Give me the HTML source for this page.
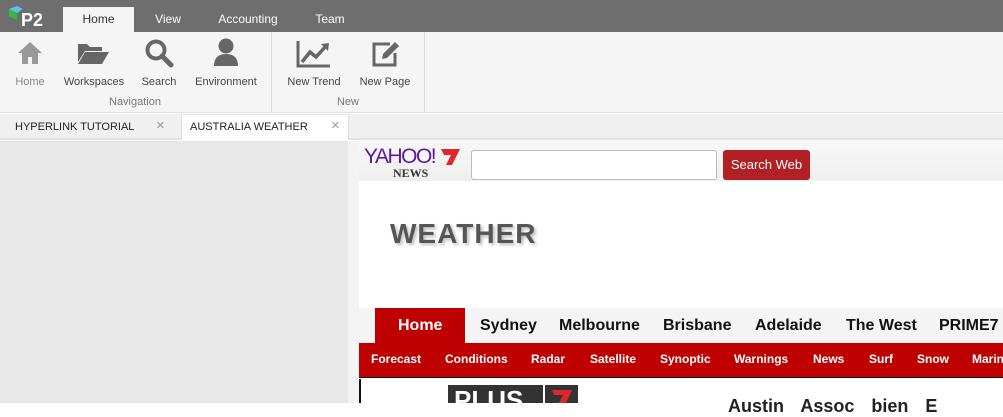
<!DOCTYPE html>
<html><head><style>
*{margin:0;padding:0;box-sizing:border-box}
body{width:1003px;height:403px;overflow:hidden;background:#fff;font-family:"Liberation Sans",sans-serif;position:relative}
.a{position:absolute}
.top{left:0;top:0;width:1003px;height:32px;background:#6e6e6e}
.tab{top:7px;height:25px;font-size:12px;color:#fff;text-align:center;line-height:25px}
.rib{left:0;top:32px;width:1003px;height:81px;background:#f5f5f5;border-bottom:1px solid #e0e0e0}
.lbl{font-size:11px;color:#444;top:76px;text-align:center}
.grp{font-size:11px;color:#777;top:96px;text-align:center}
.nav{font-size:16px;font-weight:bold;color:#111;top:317px}
.sub{font-size:12px;font-weight:bold;color:#fff;top:352px}
</style></head><body>
<div class="a top"></div>
<svg class="a" style="left:9px;top:6px" width="42" height="22"><polygon points="0,3 8,0 14,3 8,7" fill="#5fc1e8"/><polygon points="0,3 8,7 8,14 0,10" fill="#3db34a"/><text x="12" y="20" font-family="Liberation Sans" font-weight="bold" font-size="18" fill="#fff">P2</text></svg>
<div class="a tab" style="left:63px;width:71px;background:#f5f5f5;color:#333">Home</div>
<div class="a tab" style="left:144px;width:48px">View</div>
<div class="a tab" style="left:210px;width:76px">Accounting</div>
<div class="a tab" style="left:305px;width:50px">Team</div>
<div class="a rib"></div>
<div class="a" style="left:271px;top:32px;width:1px;height:80px;background:#ddd"></div>
<div class="a" style="left:424px;top:32px;width:1px;height:80px;background:#ddd"></div>
<svg class="a" style="left:16px;top:40px" width="28" height="26"><path d="M14 2 L2 13 H6 V24 H12 V17 H16 V24 H22 V13 H26 Z" fill="#999"/></svg>
<svg class="a" style="left:76px;top:40px" width="34" height="26"><path d="M2 4 H11 L14 7 H26 V11 H9 L2 22 Z" fill="#666"/><path d="M9 12 H33 L26 24 H2 Z" fill="#666"/></svg>
<svg class="a" style="left:144px;top:38px" width="30" height="30"><circle cx="12" cy="12" r="8.5" fill="none" stroke="#666" stroke-width="4"/><path d="M18 18 L27 27" stroke="#666" stroke-width="5" stroke-linecap="round"/></svg>
<svg class="a" style="left:212px;top:38px" width="28" height="30"><circle cx="14" cy="8" r="7.5" fill="#666"/><path d="M2 28 Q2 16 14 16 Q26 16 26 28 Z" fill="#666"/></svg>
<svg class="a" style="left:296px;top:40px" width="36" height="28"><path d="M2 1 V26 H34" fill="none" stroke="#666" stroke-width="3"/><path d="M6 22 L14 12 L20 17 L30 6" fill="none" stroke="#666" stroke-width="3.5"/><path d="M25 4 L33 3 L32 11 Z" fill="#666"/></svg>
<svg class="a" style="left:370px;top:39px" width="32" height="30"><path d="M20 5 H4 V26 H25 V14" fill="none" stroke="#666" stroke-width="3"/><path d="M12 20 L13 15 L25 3 L29 7 L17 19 Z" fill="#666"/></svg>
<div class="a lbl" style="left:10px;width:40px;color:#888">Home</div>
<div class="a lbl" style="left:60px;width:68px">Workspaces</div>
<div class="a lbl" style="left:138px;width:42px">Search</div>
<div class="a lbl" style="left:190px;width:72px">Environment</div>
<div class="a lbl" style="left:283px;width:62px">New Trend</div>
<div class="a lbl" style="left:356px;width:58px">New Page</div>
<div class="a grp" style="left:100px;width:70px">Navigation</div>
<div class="a grp" style="left:330px;width:36px">New</div>
<div class="a" style="left:0;top:114px;width:1003px;height:26px;background:#f0f0f0;border-bottom:2px solid #e2e2e2"></div>
<div class="a" style="left:15px;top:121px;font-size:11px;color:#222">HYPERLINK TUTORIAL</div>
<div class="a" style="left:156px;top:117px;font-size:15px;color:#999">×</div>
<div class="a" style="left:181px;top:114px;width:168px;height:26px;background:#fff;border:1px solid #ddd;border-bottom:none"></div>
<div class="a" style="left:190px;top:121px;font-size:11px;color:#222">AUSTRALIA WEATHER</div>
<div class="a" style="left:331px;top:117px;font-size:15px;color:#999">×</div>
<div class="a" style="left:0;top:141px;width:348px;height:262px;background:#e8e8e8"></div>
<div class="a" style="left:348px;top:141px;width:11px;height:262px;background:#f3f3f3"></div>
<div class="a" style="left:359px;top:141px;width:644px;height:40px;background:linear-gradient(#f8f8f8,#efefef)"></div>
<div class="a" style="left:364px;top:145px;font-size:21px;color:#5a1aa0;letter-spacing:-1.5px">YAHOO!</div>
<svg class="a" style="left:440px;top:148px" width="22" height="18"><path d="M1 1 H20 L12 17 H6 L11 7 H4 Z" fill="#e0262c"/></svg>
<div class="a" style="left:393px;top:166px;font-size:12px;font-weight:bold;color:#333;font-family:'Liberation Serif'">NEWS</div>
<div class="a" style="left:471px;top:150px;width:246px;height:30px;background:#fff;border:1px solid #bbb;border-radius:3px"></div>
<div class="a" style="left:723px;top:150px;width:87px;height:30px;background:#b02024;border-radius:3px;color:#fff;font-size:13px;text-align:center;line-height:29px">Search Web</div>
<div class="a" style="left:390px;top:218px;font-size:28px;font-weight:bold;color:#555;letter-spacing:1px;text-shadow:2px 2px 3px #bbb">WEATHER</div>
<div class="a" style="left:359px;top:308px;width:644px;height:35px;background:#f4f4f4"></div>
<div class="a" style="left:375px;top:308px;width:90px;height:35px;background:#bf0000"></div>
<div class="a nav" style="left:398px;color:#fff">Home</div>
<div class="a nav" style="left:480px">Sydney</div>
<div class="a nav" style="left:559px">Melbourne</div>
<div class="a nav" style="left:663px">Brisbane</div>
<div class="a nav" style="left:755px">Adelaide</div>
<div class="a nav" style="left:846px">The West</div>
<div class="a nav" style="left:939px">PRIME7</div>
<div class="a" style="left:359px;top:343px;width:644px;height:35px;background:#bf0000;border-bottom:1px solid #111"></div>
<div class="a sub" style="left:371px">Forecast</div>
<div class="a sub" style="left:445px">Conditions</div>
<div class="a sub" style="left:531px">Radar</div>
<div class="a sub" style="left:590px">Satellite</div>
<div class="a sub" style="left:660px">Synoptic</div>
<div class="a sub" style="left:734px">Warnings</div>
<div class="a sub" style="left:813px">News</div>
<div class="a sub" style="left:869px">Surf</div>
<div class="a sub" style="left:917px">Snow</div>
<div class="a sub" style="left:972px">Marine</div>
<div class="a" style="left:359px;top:379px;width:2px;height:24px;background:#111"></div>
<div class="a" style="left:448px;top:385px;width:95px;height:18px;background:#333;color:#fff;font-weight:bold;font-size:26px;line-height:30px;padding-left:6px;overflow:hidden">PLUS</div>
<div class="a" style="left:545px;top:385px;width:33px;height:18px;background:#333"></div>
<svg class="a" style="left:550px;top:389px" width="24" height="14"><path d="M2 1 H22 L16 14 H9 L13 6 H4 Z" fill="#e0262c"/></svg>
<div class="a" style="left:728px;top:396px;font-size:18px;font-weight:bold;color:#222;word-spacing:12px">Austin Assoc bien E</div>
</body></html>
